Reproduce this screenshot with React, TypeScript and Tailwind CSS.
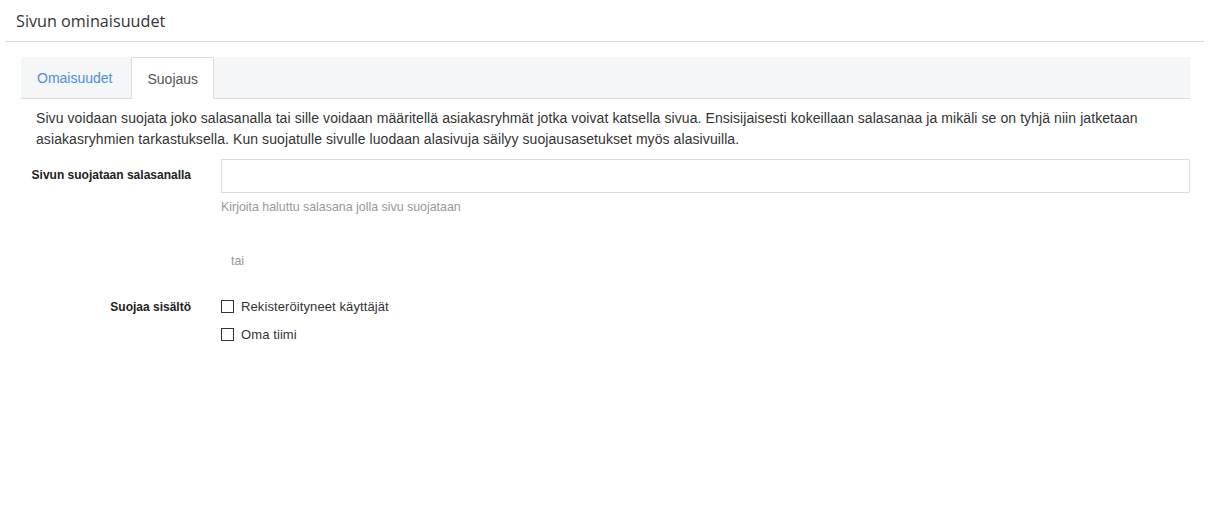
import React from "react";

export default function App() {
  return (
    <div className="min-h-[509px] w-[1210px] bg-white font-['Liberation_Sans',Arial,sans-serif] text-[#333]">
      {/* Header */}
      <div className="mx-[6px] border-b border-[#dcdcdc] px-[10px] pt-[9px] pb-[8px]">
        <h1 className="font-['Open_Sans',sans-serif] text-[16.2px] leading-[24px] text-[#333]">Sivun ominaisuudet</h1>
      </div>

      <div className="ml-[21px] mr-[20px] mt-[15px]">
        {/* Tabs */}
        <div className="flex h-[42px] border-b border-[#dcdcdc] bg-[#f5f6f8]">
          <button className="mr-[3px] px-[16px] pt-[1px] text-[14px] text-[#4a90d9]">Omaisuudet</button>
          <button className="-mb-px border border-b-0 border-[#dcdcdc] bg-white px-[15px] pt-[1px] text-[14px] text-[#555]">Suojaus</button>
        </div>

        {/* Content */}
        <p className="mt-[9px] px-[15px] text-[14px] leading-[21px] tracking-[0.08px] text-[#333]">
          Sivu voidaan suojata joko salasanalla tai sille voidaan määritellä asiakasryhmät jotka voivat katsella sivua. Ensisijaisesti kokeillaan salasanaa ja mikäli se on tyhjä niin jatketaan asiakasryhmien tarkastuksella. Kun suojatulle sivulle luodaan alasivuja säilyy suojausasetukset myös alasivuilla.
        </p>

        <div className="mt-[9px] grid grid-cols-[185px_1fr]">
          <label className="pr-[15px] pt-[8px] text-right text-[12px] font-bold leading-[17px] text-[#222]">
            Sivun suojataan salasanalla
          </label>
          <div className="pl-[15px]">
            <input type="password" className="h-[34px] w-full border border-[#dcdcdc] bg-white px-[10px] text-[14px] outline-none" />
            <div className="mt-[6px] text-[12.4px] leading-[17px] text-[#999]">Kirjoita haluttu salasana jolla sivu suojataan</div>
          </div>
        </div>

        <div className="mt-[37px] grid grid-cols-[185px_1fr]">
          <div />
          <div className="pl-[25px] text-[12.4px] leading-[17px] text-[#999]">tai</div>
        </div>

        <div className="mt-[28px] grid grid-cols-[185px_1fr]">
          <label className="pr-[15px] pt-[1px] text-right text-[12px] font-bold leading-[17px] text-[#222]">
            Suojaa sisältö
          </label>
          <div className="flex flex-col gap-[11px] pl-[15px]">
            <label className="flex h-[17px] items-center gap-[7px] text-[13px] tracking-[0.1px] text-[#333]">
              <span className="block h-[13px] w-[13px] border border-[#333] bg-white" />
              Rekisteröityneet käyttäjät
            </label>
            <label className="flex h-[17px] items-center gap-[7px] text-[13px] tracking-[0.1px] text-[#333]">
              <span className="block h-[13px] w-[13px] border border-[#333] bg-white" />
              Oma tiimi
            </label>
          </div>
        </div>
      </div>
    </div>
  );
}
